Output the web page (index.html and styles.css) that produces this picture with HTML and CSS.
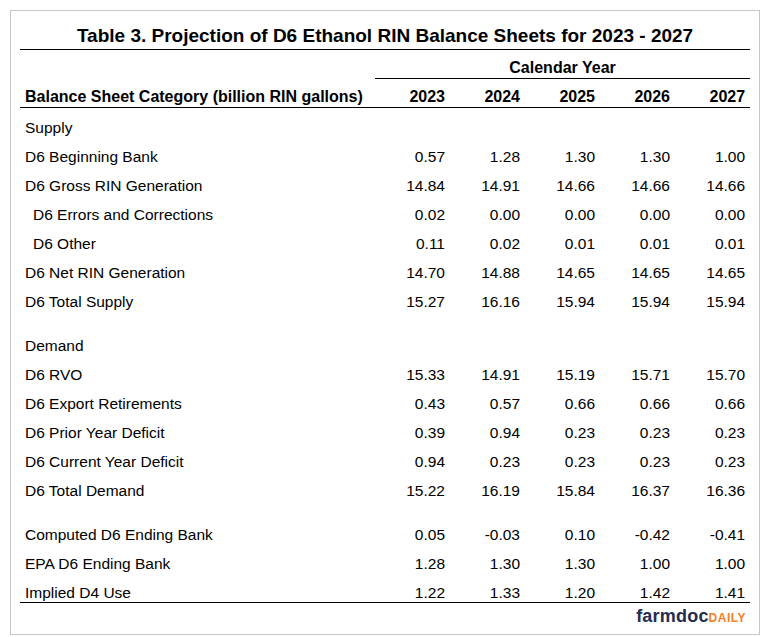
FILE: index.html
```html
<!DOCTYPE html>
<html>
<head>
<meta charset="utf-8">
<link rel="stylesheet" href="styles.css">
</head>
<body>
<div class="frame">
  <table class="rin">
    <colgroup>
      <col class="c-label">
      <col class="c-num"><col class="c-num"><col class="c-num"><col class="c-num"><col class="c-num">
    </colgroup>
    <thead>
      <tr class="r-title"><th colspan="6">Table 3. Projection of D6 Ethanol RIN Balance Sheets for 2023 - 2027</th></tr>
      <tr class="r-cal"><th class="blank"></th><th colspan="5" class="cal">Calendar Year</th></tr>
      <tr class="r-years">
        <th class="lbl">Balance Sheet Category (billion RIN gallons)</th>
        <th class="num">2023</th><th class="num">2024</th><th class="num">2025</th><th class="num">2026</th><th class="num">2027</th>
      </tr>
    </thead>
    <tbody>
      <tr class="sp-top"><td colspan="6"></td></tr>
      <tr><td class="lbl">Supply</td><td></td><td></td><td></td><td></td><td></td></tr>
      <tr><td class="lbl">D6 Beginning Bank</td><td class="num">0.57</td><td class="num">1.28</td><td class="num">1.30</td><td class="num">1.30</td><td class="num">1.00</td></tr>
      <tr><td class="lbl">D6 Gross RIN Generation</td><td class="num">14.84</td><td class="num">14.91</td><td class="num">14.66</td><td class="num">14.66</td><td class="num">14.66</td></tr>
      <tr><td class="lbl ind">D6 Errors and Corrections</td><td class="num">0.02</td><td class="num">0.00</td><td class="num">0.00</td><td class="num">0.00</td><td class="num">0.00</td></tr>
      <tr><td class="lbl ind">D6 Other</td><td class="num">0.11</td><td class="num">0.02</td><td class="num">0.01</td><td class="num">0.01</td><td class="num">0.01</td></tr>
      <tr><td class="lbl">D6 Net RIN Generation</td><td class="num">14.70</td><td class="num">14.88</td><td class="num">14.65</td><td class="num">14.65</td><td class="num">14.65</td></tr>
      <tr><td class="lbl">D6 Total Supply</td><td class="num">15.27</td><td class="num">16.16</td><td class="num">15.94</td><td class="num">15.94</td><td class="num">15.94</td></tr>
      <tr class="sp-grp"><td colspan="6"></td></tr>
      <tr><td class="lbl">Demand</td><td></td><td></td><td></td><td></td><td></td></tr>
      <tr><td class="lbl">D6 RVO</td><td class="num">15.33</td><td class="num">14.91</td><td class="num">15.19</td><td class="num">15.71</td><td class="num">15.70</td></tr>
      <tr><td class="lbl">D6 Export Retirements</td><td class="num">0.43</td><td class="num">0.57</td><td class="num">0.66</td><td class="num">0.66</td><td class="num">0.66</td></tr>
      <tr><td class="lbl">D6 Prior Year Deficit</td><td class="num">0.39</td><td class="num">0.94</td><td class="num">0.23</td><td class="num">0.23</td><td class="num">0.23</td></tr>
      <tr><td class="lbl">D6 Current Year Deficit</td><td class="num">0.94</td><td class="num">0.23</td><td class="num">0.23</td><td class="num">0.23</td><td class="num">0.23</td></tr>
      <tr><td class="lbl">D6 Total Demand</td><td class="num">15.22</td><td class="num">16.19</td><td class="num">15.84</td><td class="num">16.37</td><td class="num">16.36</td></tr>
      <tr class="sp-grp"><td colspan="6"></td></tr>
      <tr><td class="lbl">Computed D6 Ending Bank</td><td class="num">0.05</td><td class="num">-0.03</td><td class="num">0.10</td><td class="num">-0.42</td><td class="num">-0.41</td></tr>
      <tr><td class="lbl">EPA D6 Ending Bank</td><td class="num">1.28</td><td class="num">1.30</td><td class="num">1.30</td><td class="num">1.00</td><td class="num">1.00</td></tr>
      <tr class="r-last"><td class="lbl">Implied D4 Use</td><td class="num">1.22</td><td class="num">1.33</td><td class="num">1.20</td><td class="num">1.42</td><td class="num">1.41</td></tr>
    </tbody>
  </table>
  <div class="brand"><span class="farmdoc">farmdoc</span><span class="daily">DAILY</span></div>
</div>
</body>
</html>
```

FILE: styles.css
```css
html, body {
  margin: 0;
  padding: 0;
  background: #ffffff;
}

body {
  font-family: "Liberation Sans", Arial, sans-serif;
  color: #000000;
}

.frame {
  box-sizing: border-box;
  margin: 10px 0 0 10px;
  width: 750px;
  height: 625px;
  border: 1px solid #c6c6c6;
  padding: 0 9px;
}

.rin {
  width: 730px;
  border-collapse: separate;
  border-spacing: 0;
  table-layout: fixed;
}

.c-label { width: 355px; }
.c-num { width: 75px; }

.rin th, .rin td {
  padding: 0;
  box-sizing: border-box;
}

.r-title th {
  height: 39px;
  font-size: 19px;
  font-weight: 700;
  text-align: center;
  vertical-align: bottom;
  line-height: 22px;
  padding-bottom: 2px;
  border-bottom: 1px solid #000;
}

.r-cal th {
  height: 29px;
  font-size: 16px;
  font-weight: 700;
  line-height: 18px;
  vertical-align: bottom;
  padding-bottom: 1px;
}

.r-cal .cal {
  text-align: center;
  border-bottom: 1px solid #000;
}

.r-years th {
  height: 29px;
  font-size: 16px;
  font-weight: 700;
  line-height: 18px;
  vertical-align: bottom;
  padding-bottom: 1px;
  border-bottom: 1px solid #000;
}

.rin tbody td {
  height: 29px;
  font-size: 15.5px;
  line-height: 18px;
  vertical-align: middle;
}

.rin .lbl {
  text-align: left;
  padding-left: 5px;
}

.rin .lbl.ind {
  padding-left: 13px;
}

.rin .num {
  text-align: right;
  padding-right: 5px;
}

.rin tbody .sp-top td {
  height: 5px;
}

.rin tbody .sp-grp td {
  height: 15px;
}

.rin tbody .r-last td {
  height: 25px;
  vertical-align: bottom;
  border-bottom: 1px solid #000;
}

.brand {
  display: flex;
  justify-content: flex-end;
  align-items: baseline;
  padding-right: 4px;
  margin-top: 3px;
  line-height: 20px;
}

.farmdoc {
  font-size: 18px;
  font-weight: 700;
  color: #262c4d;
  letter-spacing: 0.2px;
}

.daily {
  font-size: 12px;
  font-weight: 700;
  color: #f58025;
  letter-spacing: 0.5px;
}
```
